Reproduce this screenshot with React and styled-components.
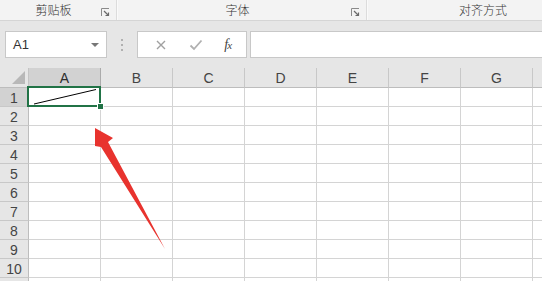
import React from "react";
import styled, { createGlobalStyle } from "styled-components";

const columns = ["A", "B", "C", "D", "E", "F", "G", ""];
const rows = [1, 2, 3, 4, 5, 6, 7, 8, 9, 10, ""];

const GlobalStyle = createGlobalStyle`
  html, body {
    margin: 0;
    padding: 0;
    background: #e6e6e6;
    overflow: hidden;
  }
  body {
    font-family: "Noto Sans CJK SC", "Liberation Sans", sans-serif;
  }
`;

const Page = styled.div`
  width: 542px;
  height: 281px;
  overflow: hidden;
  position: relative;
  background: #e6e6e6;
`;

const Ribbon = styled.div`
  display: flex;
  height: 20px;
  background: #f3f3f3;
  border-bottom: 1px solid #d5d5d5;
  white-space: nowrap;
`;

const Group = styled.div`
  flex: 0 0 ${(p) => p.$width}px;
  display: flex;
  align-items: center;
  border-right: 1px solid #dcdcdc;
  box-shadow: 1px 0 0 #fafafa;
  margin-right: 1px;
`;

const GroupLabel = styled.span`
  flex: 1;
  text-align: center;
  font-size: 12px;
  font-weight: 300;
  line-height: 20px;
  color: #333;
  padding-left: ${(p) => p.$shift || 0}px;
`;

const Launcher = styled.svg`
  flex: 0 0 9px;
  width: 9px;
  height: 9px;
  margin: 4px 6px 0 0;
`;

const FormulaRow = styled.div`
  display: flex;
  align-items: center;
  height: 27px;
  padding: 10px 0 10px 5px;
`;

const NameBox = styled.div`
  box-sizing: border-box;
  width: 102px;
  height: 27px;
  background: #fff;
  border: 1px solid #c8c8c8;
  display: flex;
  align-items: center;
  justify-content: space-between;
  padding: 0 7px 0 7px;
  font-family: "Liberation Sans", sans-serif;
  font-size: 13px;
  color: #333;
`;

const Caret = styled.span`
  width: 0;
  height: 0;
  border-left: 4px solid transparent;
  border-right: 4px solid transparent;
  border-top: 4px solid #777;
  margin-top: 1px;
`;

const Grip = styled.div`
  width: 30px;
  display: flex;
  flex-direction: column;
  align-items: center;
  gap: 3px;
  span {
    width: 2px;
    height: 2px;
    background: #b0b0b0;
  }
`;

const FxBox = styled.div`
  box-sizing: border-box;
  width: 110px;
  height: 27px;
  background: #fff;
  border: 1px solid #c8c8c8;
  display: flex;
  align-items: center;
  justify-content: space-around;
  padding: 0 4px 0 6px;
`;

const FxLabel = styled.span`
  font-family: "Liberation Serif", serif;
  font-style: italic;
  font-size: 14px;
  color: #444;
  letter-spacing: -1px;
  span {
    font-size: 11px;
  }
`;

const FormulaInput = styled.div`
  box-sizing: border-box;
  flex: 1;
  height: 27px;
  margin-left: 3px;
  background: #fff;
  border: 1px solid #c8c8c8;
  border-right: none;
`;

const Sheet = styled.div`
  position: relative;
  display: grid;
  grid-template-columns: 29px repeat(8, 72px);
  grid-template-rows: 20px repeat(11, 19px);
  background: #fff;
`;

const Corner = styled.div`
  position: relative;
  background: #e6e6e6;
  border-right: 1px solid #c4c4c4;
  border-bottom: 1px solid #bdbdbd;
  box-sizing: border-box;
  &::after {
    content: "";
    position: absolute;
    right: 3px;
    bottom: 3px;
    width: 0;
    height: 0;
    border-left: 13px solid transparent;
    border-bottom: 13px solid #b8b8b8;
  }
`;

const ColHead = styled.div`
  box-sizing: border-box;
  background: ${(p) => (p.$active ? "#d2d2d2" : "#e6e6e6")};
  border-right: 1px solid ${(p) => (p.$active ? "#ababab" : "#c8c8c8")};
  border-bottom: 1px solid ${(p) => (p.$active ? "#217346" : "#bdbdbd")};
  display: flex;
  align-items: center;
  justify-content: center;
  font-family: "Liberation Sans", sans-serif;
  font-size: 14px;
  color: ${(p) => (p.$active ? "#2d2d2d" : "#444")};
  padding-top: 1px;
`;

const RowHead = styled.div`
  box-sizing: border-box;
  background: ${(p) => (p.$active ? "#d2d2d2" : "#e6e6e6")};
  border-right: 1px solid ${(p) => (p.$active ? "#217346" : "#bdbdbd")};
  border-bottom: 1px solid #c8c8c8;
  display: flex;
  align-items: center;
  justify-content: center;
  font-family: "Liberation Sans", sans-serif;
  font-size: 14px;
  color: #444;
  padding-top: 1px;
`;

const Cell = styled.div`
  box-sizing: border-box;
  position: relative;
  border-right: 1px solid #d4d4d4;
  border-bottom: 1px solid #d4d4d4;
`;

const Selection = styled.div`
  position: absolute;
  left: 27px;
  top: 18px;
  width: 74px;
  height: 21px;
  box-sizing: border-box;
  border: 2px solid #217346;
  pointer-events: none;
  &::after {
    content: "";
    position: absolute;
    right: -5px;
    bottom: -5px;
    width: 5px;
    height: 5px;
    background: #217346;
    border: 1px solid #fff;
  }
`;

const Diagonal = styled.svg`
  position: absolute;
  left: 0;
  top: 0;
  width: 72px;
  height: 19px;
`;

const Arrow = styled.svg`
  position: absolute;
  left: 0;
  top: -68px;
  width: 200px;
  height: 281px;
  pointer-events: none;
`;

function LauncherIcon() {
  return (
    <Launcher viewBox="0 0 9 9">
      <path d="M0.5 8 V0.5 H8" fill="none" stroke="#8a8a8a" strokeWidth="1" />
      <path d="M3 3 L7 7 M4.5 7.5 H7.5 V4.5" fill="none" stroke="#6a6a6a" strokeWidth="1.2" />
    </Launcher>
  );
}

export default function App() {
  return (
    <Page>
      <GlobalStyle />
      <Ribbon>
        <Group $width={116}>
          <GroupLabel $shift={6}>剪贴板</GroupLabel>
          <LauncherIcon />
        </Group>
        <Group $width={248}>
          <GroupLabel $shift={6}>字体</GroupLabel>
          <LauncherIcon />
        </Group>
        <Group $width={230}>
          <GroupLabel>对齐方式</GroupLabel>
        </Group>
      </Ribbon>

      <FormulaRow>
        <NameBox>
          A1
          <Caret />
        </NameBox>
        <Grip>
          <span />
          <span />
          <span />
        </Grip>
        <FxBox>
          <svg width="12" height="12" viewBox="0 0 12 12">
            <path d="M2 2 L10 10 M10 2 L2 10" stroke="#a0a0a0" strokeWidth="1.4" />
          </svg>
          <svg width="14" height="12" viewBox="0 0 14 12">
            <path d="M1.5 6.5 L5 10 L12.5 1.5" fill="none" stroke="#b0b0b0" strokeWidth="1.8" />
          </svg>
          <FxLabel>
            f<span>x</span>
          </FxLabel>
        </FxBox>
        <FormulaInput />
      </FormulaRow>

      <Sheet>
        <Corner />
        {columns.map((c, i) => (
          <ColHead key={i} $active={c === "A"}>
            {c}
          </ColHead>
        ))}
        {rows.map((r, ri) => (
          <React.Fragment key={ri}>
            <RowHead $active={r === 1}>{r}</RowHead>
            {columns.map((c, ci) => (
              <Cell key={ci}>
                {r === 1 && c === "A" && (
                  <Diagonal viewBox="0 0 72 19">
                    <line x1="5" y1="16" x2="67" y2="1.5" stroke="#000" strokeWidth="1" />
                  </Diagonal>
                )}
              </Cell>
            ))}
          </React.Fragment>
        ))}
        <Selection />
        <Arrow viewBox="0 0 200 281">
          <polygon
            points="95,128 113,138 108,142 165,249 101,147 95,146"
            fill="#e8332e"
          />
        </Arrow>
      </Sheet>
    </Page>
  );
}
